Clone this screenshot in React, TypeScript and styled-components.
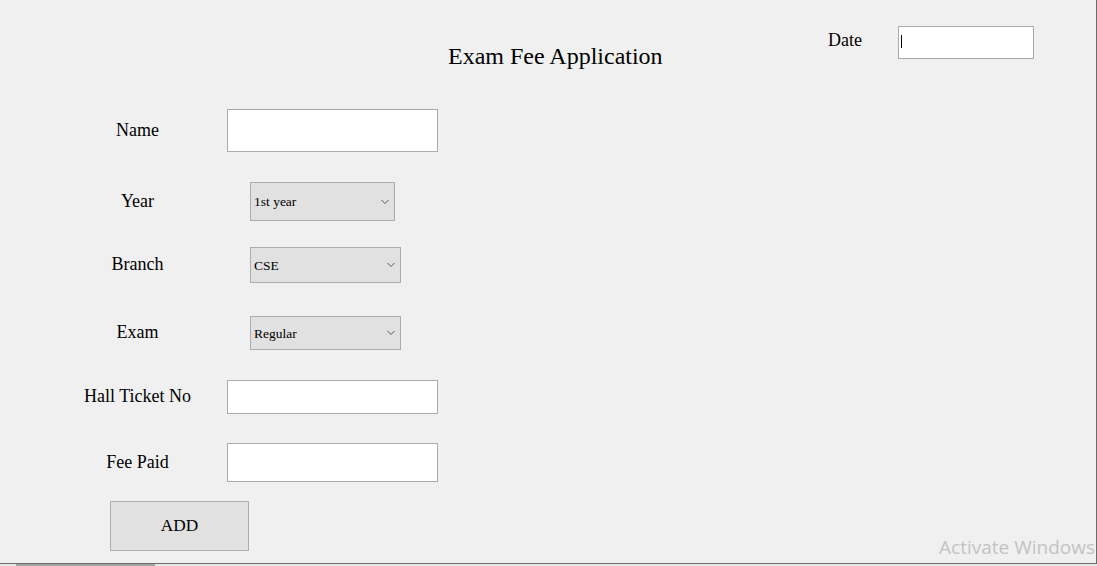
import styled, { createGlobalStyle } from "styled-components";

const GlobalStyle = createGlobalStyle`
  html, body {
    margin: 0;
    padding: 0;
    background: #f0f0f0;
  }
  body {
    font-family: "Liberation Serif", "Times New Roman", serif;
    color: #000;
    overflow: hidden;
  }
`;

const Window = styled.div`
  position: relative;
  width: 1096px;
  height: 563px;
  background: #f0f0f0;
  border-right: 1px solid #6b6b6b;
  border-bottom: 1px solid #6b6b6b;
  display: flex;
  flex-direction: column;
`;

const Strip = styled.div`
  display: flex;
  height: 2px;
  background: #e6e6e6;
`;

const StripTab = styled.div`
  width: 139px;
  margin-left: 16px;
  background: #a3a3a3;
`;

const Header = styled.div`
  display: flex;
  align-items: flex-start;
  height: 80px;
  padding-top: 26px;
  box-sizing: border-box;
`;

const Title = styled.h1`
  margin: 16px 0 0 448px;
  font-size: 24px;
  font-weight: normal;
  line-height: 28px;
`;

const DateGroup = styled.div`
  margin-left: auto;
  margin-right: 62px;
  display: flex;
  align-items: flex-start;
  gap: 36px;
`;

const DateLabel = styled.span`
  margin-top: 4px;
  font-size: 18px;
  line-height: 20px;
`;

const CaretBox = styled.div`
  position: relative;
  width: 136px;
  height: 33px;
`;

const Caret = styled.span`
  position: absolute;
  left: 3px;
  top: 9px;
  width: 1px;
  height: 13px;
  background: #000;
`;

const Form = styled.div`
  display: flex;
  flex-direction: column;
  padding-left: 70px;
  margin-top: 29px;
`;

const Row = styled.div<{ $mt: number; $h: number }>`
  display: flex;
  align-items: center;
  margin-top: ${(p) => p.$mt}px;
  height: ${(p) => p.$h}px;
`;

const Label = styled.span`
  width: 135px;
  text-align: center;
  font-size: 18px;
  line-height: 20px;
  margin-top: -2px;
`;

const TextBox = styled.input<{ $w?: number }>`
  box-sizing: border-box;
  width: ${(p) => p.$w ?? 211}px;
  height: 100%;
  margin: 0 0 0 22px;
  padding: 0 3px;
  border: 1px solid #ababab;
  background: #fff;
  outline: none;
  font-family: "Liberation Serif", serif;
  font-size: 15px;
`;

const DateBox = styled(TextBox)`
  margin: 0;
`;

const SelectWrap = styled.div<{ $w: number }>`
  position: relative;
  width: ${(p) => p.$w}px;
  height: 100%;
  margin-left: 45px;
`;

const Select = styled.select`
  appearance: none;
  -webkit-appearance: none;
  box-sizing: border-box;
  width: 100%;
  height: 100%;
  margin: 0;
  padding: 0 0 0 3px;
  border: 1px solid #acacac;
  border-radius: 0;
  background: #e1e1e1;
  color: #000;
  outline: none;
  font-family: "Liberation Serif", serif;
  font-size: 13.5px;
`;

const Chevron = styled.svg`
  position: absolute;
  right: 6px;
  top: 50%;
  transform: translateY(-50%);
  pointer-events: none;
`;

const AddButton = styled.button`
  box-sizing: border-box;
  width: 139px;
  height: 50px;
  margin-left: 40px;
  border: 1px solid #adadad;
  background: #e1e1e1;
  font-family: "Liberation Serif", serif;
  font-size: 17.3px;
  color: #000;
`;

const Watermark = styled.div`
  position: absolute;
  right: 1px;
  bottom: 3px;
  font-family: "Open Sans", "Noto Sans", sans-serif;
  font-size: 19px;
  color: #c3c3c3;
  pointer-events: none;
`;

const DropDown = ({ w, options }: { w: number; options: string[] }) => (
  <SelectWrap $w={w}>
    <Select defaultValue={options[0]}>
      {options.map((o) => (
        <option key={o}>{o}</option>
      ))}
    </Select>
    <Chevron width="8" height="5" viewBox="0 0 8 5">
      <path d="M0.5 0.5 L4 4 L7.5 0.5" fill="none" stroke="#5a5a5a" strokeWidth="1" />
    </Chevron>
  </SelectWrap>
);

export default function App() {
  return (
    <>
      <GlobalStyle />
      <Window>
        <Header>
          <Title>Exam Fee Application</Title>
          <DateGroup>
            <DateLabel>Date</DateLabel>
            <CaretBox>
              <DateBox $w={136} />
              <Caret />
            </CaretBox>
          </DateGroup>
        </Header>
        <Form>
          <Row $mt={0} $h={43}>
            <Label>Name</Label>
            <TextBox />
          </Row>
          <Row $mt={30} $h={39}>
            <Label>Year</Label>
            <DropDown w={145} options={["1st year", "2nd year", "3rd year", "4th year"]} />
          </Row>
          <Row $mt={26} $h={36}>
            <Label>Branch</Label>
            <DropDown w={151} options={["CSE", "ECE", "EEE", "MECH", "CIVIL"]} />
          </Row>
          <Row $mt={33} $h={34}>
            <Label>Exam</Label>
            <DropDown w={151} options={["Regular", "Supplementary"]} />
          </Row>
          <Row $mt={30} $h={34}>
            <Label>Hall Ticket No</Label>
            <TextBox />
          </Row>
          <Row $mt={29} $h={39}>
            <Label>Fee Paid</Label>
            <TextBox />
          </Row>
          <Row $mt={19} $h={50}>
            <AddButton>ADD</AddButton>
          </Row>
        </Form>
        <Watermark>Activate Windows</Watermark>
      </Window>
      <Strip>
        <StripTab />
      </Strip>
    </>
  );
}
